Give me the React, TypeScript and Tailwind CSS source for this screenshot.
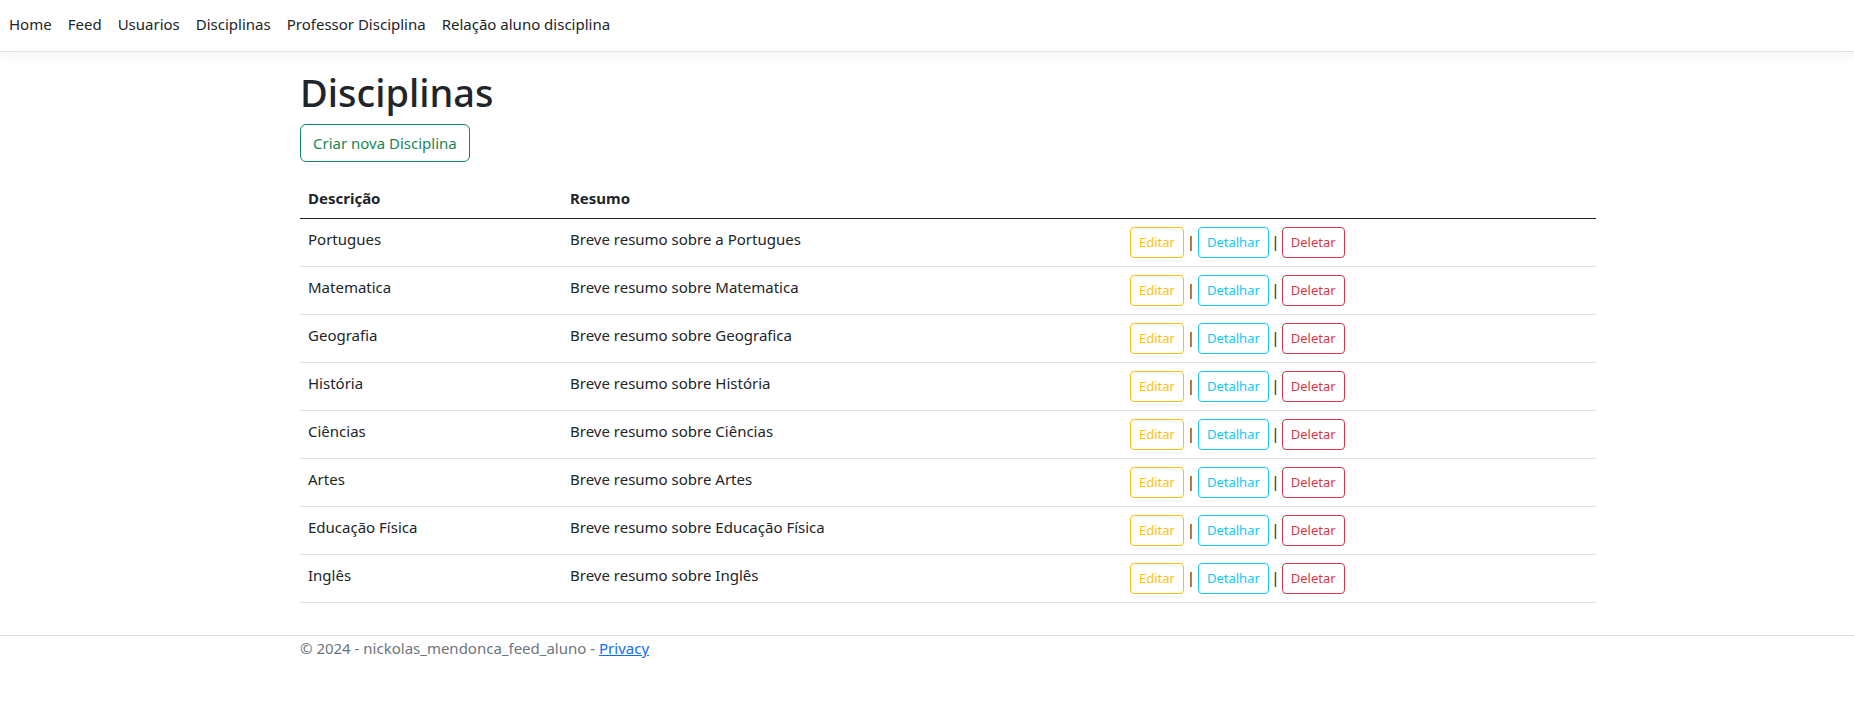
import React from "react";

const disciplinas = [
  { nome: "Portugues", resumo: "Breve resumo sobre a Portugues" },
  { nome: "Matematica", resumo: "Breve resumo sobre Matematica" },
  { nome: "Geografia", resumo: "Breve resumo sobre Geografica" },
  { nome: "História", resumo: "Breve resumo sobre História" },
  { nome: "Ciências", resumo: "Breve resumo sobre Ciências" },
  { nome: "Artes", resumo: "Breve resumo sobre Artes" },
  { nome: "Educação Física", resumo: "Breve resumo sobre Educação Física" },
  { nome: "Inglês", resumo: "Breve resumo sobre Inglês" },
];

const links = [
  "Home",
  "Feed",
  "Usuarios",
  "Disciplinas",
  "Professor Disciplina",
  "Relação aluno disciplina",
];

const App = () => {
  return (
    <div className="min-h-screen bg-white text-[#212529] font-['Segoe_UI','Noto_Sans',sans-serif] text-[15px] leading-6">
      {/* Navbar */}
      <nav className="h-[52px] border-b border-[#dee2e6] bg-white shadow-[0_4px_12px_rgba(0,0,0,0.05)] pt-[12px] pl-[1px]">
        <ul className="flex items-center">
          {links.map((l) => (
            <li key={l}>
              <a href="#" className="block px-2 text-[#212529]">
                {l}
              </a>
            </li>
          ))}
        </ul>
      </nav>

      {/* Conteudo */}
      <main className="ml-[300px] w-[1296px] pt-4 pb-8">
        <h1 className="text-[38px] leading-[48px] font-medium mb-2">Disciplinas</h1>
        <p className="mb-4">
          <a
            href="#"
            className="inline-block border border-[#198754] text-[#198754] rounded-[6px] px-3 py-[6px] leading-6"
          >
            Criar nova Disciplina
          </a>
        </p>

        <table className="w-full border-collapse">
          <thead>
            <tr className="border-b border-[#212529]">
              <th className="w-[262px] px-2 py-2 text-left font-bold">Descrição</th>
              <th className="w-[560px] px-2 py-2 text-left font-bold">Resumo</th>
              <th className="px-2 py-2"></th>
            </tr>
          </thead>
          <tbody>
            {disciplinas.map((d) => (
              <tr key={d.nome} className="border-b border-[#dee2e6]">
                <td className="px-2 py-2 align-top">{d.nome}</td>
                <td className="px-2 py-2 align-top">{d.resumo}</td>
                <td className="px-2 py-2 align-top whitespace-nowrap">
                  <a
                    href="#"
                    className="inline-block border border-[#ffc107] text-[#ffc107] rounded-[4px] px-2 py-1 text-[13px] leading-[21px]"
                  >
                    Editar
                  </a>
                  <span className="inline-block w-[14px] text-center">|</span>
                  <a
                    href="#"
                    className="inline-block border border-[#0dcaf0] text-[#0dcaf0] rounded-[4px] px-2 py-1 text-[13px] leading-[21px]"
                  >
                    Detalhar
                  </a>
                  <span className="inline-block w-[13px] text-center">|</span>
                  <a
                    href="#"
                    className="inline-block border border-[#dc3545] text-[#dc3545] rounded-[4px] px-2 py-1 text-[13px] leading-[21px]"
                  >
                    Deletar
                  </a>
                </td>
              </tr>
            ))}
          </tbody>
        </table>
      </main>

      {/* Footer */}
      <footer className="border-t border-[#dee2e6] text-[#6c757d]">
        <div className="ml-[300px] w-[1296px] leading-6">
          © 2024 - nickolas_mendonca_feed_aluno -{" "}
          <a href="#" className="text-[#0d6efd] underline">
            Privacy
          </a>
        </div>
      </footer>
    </div>
  );
};

export default App;
